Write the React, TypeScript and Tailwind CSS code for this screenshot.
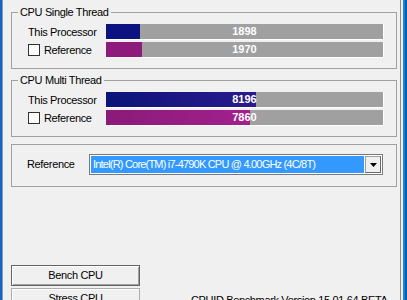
import type { ReactNode } from 'react';

type RowProps = {
  label: string;
  check?: boolean;
  fillClass: string;
  value: string;
};

const ScoreRow = ({ label, check, fillClass, value }: RowProps) => (
  <div className="flex h-[16px] items-center">
    <div className="flex w-[78px] items-center">
      {check && <span className="mr-[4px] h-[12px] w-[12px] border border-[#333333] bg-white" />}
      <span>{label}</span>
    </div>
    {/* bar with the score on top of the fill */}
    <div className="grid h-[16px] w-[278px] border-b border-r border-white bg-[#a0a0a0]">
      <div className={`col-start-1 row-start-1 h-full justify-self-start ${fillClass}`} />
      <span className="col-start-1 row-start-1 flex items-center justify-center text-[11px] font-bold tracking-normal text-white">
        {value}
      </span>
    </div>
  </div>
);

const GroupBox = ({ title, children }: { title: string; children: ReactNode }) => (
  <fieldset className="m-0 min-w-0 border border-[#a0a0a0] pb-[10px] pl-[6px] pr-[12px] pt-[5px]">
    <legend className="px-[2px] leading-[13px]">{title}</legend>
    <div className="flex flex-col gap-[2px] pl-[10px]">{children}</div>
  </fieldset>
);

export default function App() {
  return (
    <div className="flex h-[300px] w-[407px] overflow-hidden bg-[#f0f0f0] font-['Liberation_Sans',Arial,sans-serif] text-[11px] leading-[13px] tracking-[-0.35px] text-black">
      {/* window frame, left */}
      <div className="w-[2px] bg-[#1565c0]" />
      <div className="w-[1px] bg-[#7f9db9]" />

      <main className="flex w-[397px] flex-col pl-[8px] pr-[3px] pt-[6px]">
        <GroupBox title="CPU Single Thread">
          <ScoreRow label="This Processor" fillClass="w-[34px] bg-[#0c1380]" value="1898" />
          <ScoreRow label="Reference" check fillClass="w-[36px] bg-[#8f1a7d]" value="1970" />
        </GroupBox>

        <div className="mt-[5px]">
          <GroupBox title="CPU Multi Thread">
            <ScoreRow
              label="This Processor"
              fillClass="w-[150px] bg-gradient-to-r from-[#0a1478] to-[#2a1a8e]"
              value="8196"
            />
            <ScoreRow
              label="Reference"
              check
              fillClass="w-[144px] bg-gradient-to-r from-[#8a1a78] to-[#a3208e]"
              value="7860"
            />
          </GroupBox>
        </div>

        {/* reference processor picker */}
        <div className="mt-[7px] flex items-center border border-[#a0a0a0] pb-[11px] pl-[15px] pr-[13px] pt-[9px]">
          <span className="w-[62px]">Reference</span>
          <div className="flex h-[21px] w-[294px] border border-[#7a7a7a] bg-white p-[1px]">
            <div className="flex flex-1 items-center whitespace-nowrap bg-[#3399ff] pl-[2px] tracking-[-0.8px] text-white">
              Intel(R) Core(TM) i7-4790K CPU @ 4.00GHz (4C/8T)
            </div>
            <div className="ml-[1px] flex w-[16px] items-center justify-center border border-[#a0a0a0] border-b-[#696969] border-r-[#696969] bg-[#f0f0f0]">
              <svg width="7" height="4" viewBox="0 0 7 4">
                <path d="M0 0h7L3.5 4z" fill="#000" />
              </svg>
            </div>
          </div>
        </div>

        <div className="mt-[78px] flex flex-col gap-[2px]">
          <button className="h-[21px] w-[129px] border border-[#646464] bg-[#f0f0f0] shadow-[inset_1px_1px_0_#ffffff,inset_-1px_-1px_0_#a0a0a0]">
            Bench CPU
          </button>
          <div className="flex items-start">
            <button className="h-[21px] w-[129px] shrink-0 border border-[#adadad] bg-[#f0f0f0] shadow-[inset_1px_1px_0_#ffffff]">
              Stress CPU
            </button>
            <span className="ml-[51px] mt-[6px] whitespace-nowrap">CPUID Benchmark Version 15.01.64 BETA</span>
          </div>
        </div>
      </main>

      {/* window frame, right */}
      <div className="w-[1px] bg-[#8a8a8a]" />
      <div className="w-[2px] bg-[#f0f0f0]" />
      <div className="w-[2px] bg-[#1d7fd6]" />
      <div className="w-[2px] bg-[#0b5cad]" />
    </div>
  );
}
